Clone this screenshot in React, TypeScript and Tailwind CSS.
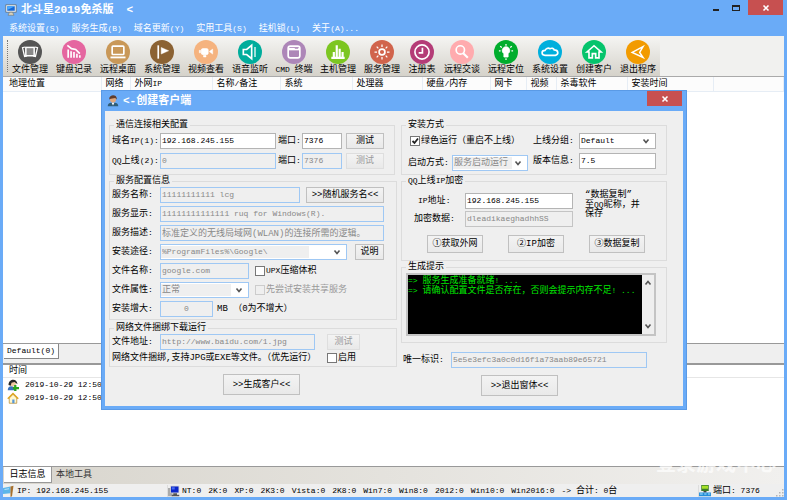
import React, { useState } from 'react';

// --- DATA ---
const MENUS = ['系统设置(S)', '服务生成(B)', '域名更新(Y)', '实用工具(S)', '挂机锁(L)', '关于(A)...'];

interface Tool { label: string; color: string; width: string; icon: React.ReactNode }

const TOOLS: Tool[] = [
    { label: '文件管理', color: 'bg-[#555555]', width: 'w-11', icon: <><path d="M6 6l-3 .8 2.500 10.500 3-.5M18 6l3 .8-2.500 10.500-3-.5" strokeWidth="1.500" /><rect x="7" y="6.500" width="10" height="10" strokeWidth="1.800" fill="#888" /></> },
    { label: '键盘记录', color: 'bg-[#e566a0]', width: 'w-11', icon: <path d="M5 19V9M8.500 19v-8M12 19v-7M15.500 19v-5M19 19v-3M4 4l5 4 5 1 5 5" strokeWidth="2" /> },
    { label: '远程桌面', color: 'bg-[#c99858]', width: 'w-11', icon: <><rect x="5" y="5" width="14" height="10" rx="1" /><path d="M3 18.500h18" strokeWidth="2.200" /></> },
    { label: '系统管理', color: 'bg-[#8b6233]', width: 'w-11', icon: <><path d="M7.500 4v16" strokeWidth="2" /><path d="M11 6.500l9 4-9 4z" fill="#fff" strokeWidth=".5" /></> },
    { label: '视频查看', color: 'bg-[#f5b37f]', width: 'w-11', icon: <><rect x="6.500" y="8" width="8" height="7" rx="1.500" fill="#fff" strokeWidth="1" /><path d="M16 11.500l4-3v6zM4 10h1.500v3H4zM9 16h3v2H9z" fill="#fff" strokeWidth=".6" /></> },
    { label: '语音监听', color: 'bg-[#00ad9c]', width: 'w-11', icon: <><path d="M4 9h4l6-5v16l-6-5H4z" /><path d="M18 6v12" strokeWidth="1.500" /></> },
    { label: 'CMD 终端', color: 'bg-[#ad86b8]', width: 'w-11', icon: <><rect x="5" y="5" width="14" height="14" rx="2.500" /><path d="M5 8.500h14" strokeWidth="3" /><path d="M13 7.500h4" stroke="#ad86b8" strokeWidth="1.200" /></> },
    { label: '主机管理', color: 'bg-[#7cc621]', width: 'w-11', icon: <path d="M4 19h16M7 18v-6M10.500 18V4M14 18V8M17.500 18v-6" strokeWidth="2.600" /> },
    { label: '服务管理', color: 'bg-[#d1644c]', width: 'w-11', icon: <><circle cx="12" cy="12" r="3.500" /><path d="M12 3v3M12 18v3M3 12h3M18 12h3M5.600 5.600l2 2M16.400 16.400l2 2M5.600 18.400l2-2M16.400 7.600l2-2" strokeWidth="1.500" /></> },
    { label: '注册表', color: 'bg-[#b43c77]', width: 'w-9', icon: <><circle cx="12" cy="12" r="8.500" /><path d="M12.500 7v6H8" strokeWidth="2" /></> },
    { label: '远程交谈', color: 'bg-[#ffabae]', width: 'w-11', icon: <><circle cx="10" cy="9.500" r="5" strokeWidth="2" /><path d="M13.500 13.500L19 19" strokeWidth="2.500" /></> },
    { label: '远程定位', color: 'bg-[#00ad2d]', width: 'w-11', icon: <><path d="M9.500 18h5v-4a4.500 4.500 0 1 0-5 0z" fill="#fff" strokeWidth="1" /><path d="M12 2.500v2M5 5l2 1.500M19 5l-2 1.500M3.500 10.500h2M18.500 10.500h2M11 20.500h2" strokeWidth="1.500" /></> },
    { label: '系统设置', color: 'bg-[#00afdd]', width: 'w-11', icon: <path d="M6 16a3.500 3 0 0 1 0-6c1-2 3.500-3.500 6-2 2-1 4.500-.5 5 1.500 5.500 0 5.500 5.500 1.500 6.500z" /> },
    { label: '创建客户', color: 'bg-[#05c46c]', width: 'w-11', icon: <path d="M3.500 12L12 4.500l8.500 7.500H18v7h-4v-5h-4v5H6v-7z" /> },
    { label: '退出程序', color: 'bg-[#f29b00]', width: 'w-11', icon: <path d="M18 5.500L5 12.500l13 6-4-6z" strokeWidth="1.800" /> },
];

const COLUMNS = [
    { label: '地理位置', width: 'w-[98px] pl-1.5' },
    { label: '网络', width: 'w-[29px] pl-1' },
    { label: '外网IP', width: 'w-[82px] pl-1' },
    { label: '名称/备注', width: 'w-[68px] pl-1' },
    { label: '系统', width: 'w-[72px] pl-1' },
    { label: '处理器', width: 'w-[70px] pl-1' },
    { label: '硬盘/内存', width: 'w-[68px] pl-1' },
    { label: '网卡', width: 'w-9 pl-1' },
    { label: '视频', width: 'w-[30px] pl-1' },
    { label: '杀毒软件', width: 'w-[71px] pl-1' },
    { label: '安装时间', width: 'w-[86px] pl-1' },
    { label: '', width: 'w-auto' },
];

const SYSTEMS = ['NT:0', '2K:0', 'XP:0', '2K3:0', 'Vista:0', '2K8:0', 'Win7:0', 'Win8:0', '2012:0', 'Win10:0', 'Win2016:0'];

// Latin runs are set one pixel smaller than the Chinese text around them
const Mixed = ({ text }: { text: string }) => (
    <>{text.split(/([\x20-\x7e]+)/).map((part, i) => (i % 2 ? <span key={i} className="text-[8px]">{part}</span> : part))}</>
);

// --- ICONS ---
const MonitorIcon = () => (
    <svg viewBox="0 0 16 16" className="h-3 w-3 shrink-0"><path d="M1 1h14v10H1z" fill="#e8f0f5" stroke="#5b6a75" /><path d="M3 3h10v6H3z" fill="#1767d5" /><path d="M3 3h10L3 8z" fill="#49a9ff" /><path d="M6 11h4l2 4H4z" fill="#d8d3c0" stroke="#6d6d60" strokeWidth=".7" /></svg>
);
const PersonIcon = () => (
    <svg viewBox="0 0 16 16" className="h-3 w-3 shrink-0"><path d="M1 15c0-4 3-5 7-5s7 1 7 5z" fill="#305d78" /><path d="M6 10l2 4 2-4z" fill="#fff" /><circle cx="8" cy="6" r="4" fill="#dfa77d" /><path d="M3 6c-1-7 11-8 10 0l-2-2-6 1z" fill="#603c2c" /></svg>
);
const UserAddIcon = () => (
    <svg viewBox="0 0 16 16" className="h-3 w-3 shrink-0"><path d="M1 15c0-5 3-6 7-5l5 5z" fill="#3a72bc" /><circle cx="8" cy="6" r="4" fill="#efc8a1" /><path d="M2 8C2 0 13-2 14 7l-4-3-4 1-1 4z" fill="#262626" /><path d="M11 8v8M8 12h8" stroke="#29a61c" strokeWidth="3" /></svg>
);
const HomeIcon = () => (
    <svg viewBox="0 0 16 16" className="h-3 w-3 shrink-0"><path d="M3 8l5-5 5 5v7H3z" fill="#fff8cf" stroke="#b88b30" /><path d="M1 9l7-7 7 7" fill="none" stroke="#dda521" strokeWidth="2" /><path d="M7 10h3v5H7z" fill="#5898d8" /></svg>
);
const SignIcon = () => (
    <svg viewBox="0 0 16 16" className="h-3 w-3 shrink-0"><path d="M0 4l10-2v9L0 12z" fill="#5cb5e9" /><path d="M10 2l4-1-2 14-2 1z" fill="#a8702c" /><path d="M2 6l6-1" stroke="#d5f1ff" /></svg>
);
const ComputersIcon = () => (
    <svg viewBox="0 0 16 16" className="h-3 w-3 shrink-0"><path d="M0 4h6v11H0z" fill="#aaa" /><path d="M3 1h12v10H3z" fill="#cacbd6" /><path d="M4 2h10v8H4z" fill="#0b26c9" /><path d="M5 3h4v3H5z" fill="#496bf2" /><path d="M7 11h5v2H7zM5 13h10v2H5z" fill="#555" /></svg>
);
const NetworkIcon = () => (
    <svg viewBox="0 0 16 16" className="h-3 w-3 shrink-0"><path d="M3 0h10v8H3z" fill="#3b7d27" /><path d="M4 1h8v4H4z" fill="#a5e028" /><path d="M6 8h4v2H6z" fill="#444" /><path d="M0 10h16v5H0z" fill="#278ed8" /><path d="M1 11h4v2H1zM7 11h3v2H7zM12 11h3v2h-3z" fill="#7cc8f5" /></svg>
);
const CloseIcon = () => (
    <svg viewBox="0 0 8 8" className="h-2 w-2" stroke="#fff" strokeWidth="1.600"><path d="M1.500 1.500l5 5M6.500 1.500l-5 5" /></svg>
);
const GripIcon = () => (
    <svg viewBox="0 0 8 8" className="h-2 w-2 self-end" fill="#b5b5b5"><path d="M6 0h1.500v1.500H6zM3 3h1.500v1.500H3zM6 3h1.500v1.500H6zM0 6h1.500v1.500H0zM3 6h1.500v1.500H3zM6 6h1.500v1.500H6z" /></svg>
);
const Chevron = ({ className = '' }: { className?: string }) => (
    <svg viewBox="0 0 8 8" className={`h-2 w-2 shrink-0 ${className}`} fill="none" stroke="#555" strokeWidth="1.600"><path d="M1.500 2.500L4 5.500l2.500-3" /></svg>
);

// --- FORM PARTS ---
const Group = ({ title, className = '', children }: { title: string; className?: string; children: React.ReactNode }) => (
    <fieldset className={`min-w-0 border border-[#dcdcdc] ${className}`}>
        <legend className="ml-1 h-3 px-0.5 leading-3"><Mixed text={title} /></legend>
        {children}
    </fieldset>
);

interface FieldProps { id: string; label: string; value: string; off?: boolean; labelWidth?: string; className?: string; boxClass?: string; textClass?: string }

const Field = ({ id, label, value, off, labelWidth = 'w-12', className = '', boxClass = 'border-[#9fc8f4]', textClass = 'text-[8px]' }: FieldProps) => (
    <div className={`flex min-w-0 items-center ${className}`}>
        <label htmlFor={id} className={`shrink-0 whitespace-nowrap ${labelWidth}`}><Mixed text={label} /></label>
        <input id={id} defaultValue={value} disabled={off} className={`h-4 w-full min-w-0 flex-1 border px-px pb-0.5 leading-3 ${textClass} ${off ? 'bg-[#efefef] text-[#888]' : 'bg-white text-black'} ${boxClass}`} />
    </div>
);

const Choice = ({ id, label, value, off, labelWidth = 'w-12', className = '', boxClass = 'border-[#9fc8f4]', textClass = 'text-[9px]' }: FieldProps) => (
    <div className={`flex min-w-0 items-center ${className}`}>
        <label htmlFor={id} className={`shrink-0 whitespace-nowrap ${labelWidth}`}><Mixed text={label} /></label>
        <div className={`grid h-4 min-w-0 flex-1 grid-cols-[1fr_13px] items-center border bg-white ${boxClass}`}>
            <select id={id} disabled={off} className={`col-span-2 col-start-1 row-start-1 h-3 w-full appearance-none bg-linear-to-r pl-px leading-3 disabled:opacity-100 ${textClass} ${off ? 'from-[#efefef] from-80% to-white to-80% text-[#888]' : 'text-black'}`}>
                <option>{value}</option>
            </select>
            <Chevron className="pointer-events-none col-start-2 row-start-1" />
        </div>
    </div>
);

const Btn = ({ className = '', off, children }: { className?: string; off?: boolean; children: React.ReactNode }) => (
    <button disabled={off} className={`shrink-0 border bg-linear-to-b from-[#f3f3f3] to-[#e9e9e9] leading-3 whitespace-nowrap ${off ? 'border-[#dedede] text-[#999]' : 'border-[#c0c0c0] text-black'} ${className}`}>{children}</button>
);

const Check = ({ label, on, off, className = '' }: { label: string; on?: boolean; off?: boolean; className?: string }) => (
    <label className={`flex items-center gap-px whitespace-nowrap ${off ? 'text-[#999]' : ''} ${className}`}>
        <span className="grid h-[10px] w-[10px] shrink-0 grid-cols-1">
            <input type="checkbox" defaultChecked={on} disabled={off} className={`peer col-start-1 row-start-1 h-[10px] w-[10px] appearance-none border ${off ? 'border-[#ccc] bg-[#efefef]' : 'border-[#777] bg-white'}`} />
            <svg viewBox="0 0 10 10" className="pointer-events-none invisible col-start-1 row-start-1 h-[10px] w-[10px] peer-checked:visible" fill="none" stroke="#222" strokeWidth="1.800"><path d="M2.500 5l2 2 3.500-4.500" /></svg>
        </span>
        <span><Mixed text={label} /></span>
    </label>
);

// --- DIALOG ---
const ClientDialog = ({ onClose }: { onClose: () => void }) => (
    <section role="dialog" aria-label="创建客户端" className="absolute top-[90px] right-[100px] left-[101px] border border-[#5a9ae6] bg-[#6aabf7] px-[3px] pb-[3px]">
        <header className="flex h-5 items-center gap-1 pl-0.5 text-white">
            <PersonIcon />
            <h2 className="flex-1 text-[11px] font-bold">&lt;-创建客户端</h2>
            <button aria-label="关闭" onClick={onClose} className="mr-px flex h-[15px] w-[35px] items-center justify-center self-start bg-[#c75050]"><CloseIcon /></button>
        </header>
        <div className="flex gap-1 bg-[#efefef] px-1 pt-2 pb-2.5">
            <div className="flex w-[288px] flex-col">
                <Group title="通信连接相关配置" className="mr-0.5 h-14">
                    <div className="flex flex-col gap-1 pt-0.5 pr-2.5 pl-0.5">
                        <div className="flex items-center gap-0.5">
                            <Field id="host" label="域名IP(1):" value="192.168.245.155" className="flex-1" boxClass="border-[#b4b4b4]" />
                            <Field id="port" label="端口:" value="7376" labelWidth="w-6" className="w-16" boxClass="border-[#b4b4b4]" />
                            <Btn className="ml-0.5 h-4 w-[38px]">测试</Btn>
                        </div>
                        <div className="flex items-center gap-0.5">
                            <Field id="host2" label="QQ上线(2):" value="0" off className="flex-1" />
                            <Field id="port2" label="端口:" value="7376" off labelWidth="w-6" className="w-16" />
                            <Btn off className="ml-0.5 h-4 w-[38px]">测试</Btn>
                        </div>
                    </div>
                </Group>
                <Group title="服务配置信息" className="h-[145px]">
                    <div className="flex flex-col gap-[3px] pr-3 pl-0.5">
                        <div className="flex items-center gap-1.5">
                            <Field id="svc" label="服务名称:" value="11111111111 lcg" off className="flex-1" />
                            <Btn className="h-4 w-[78px]">&gt;&gt;随机服务名&lt;&lt;</Btn>
                        </div>
                        <Field id="display" label="服务显示:" value="11111111111111 ruq for Windows(R)." off />
                        <Field id="desc" label="服务描述:" value="标准定义的无线局域网(WLAN)的连接所需的逻辑。" off textClass="text-[9px]" />
                        <div className="flex items-center gap-2">
                            <Choice id="path" label="安装途径:" value="%ProgramFiles%\Google\" off className="flex-1" textClass="text-[8px]" />
                            <Btn className="h-4 w-[29px]">说明</Btn>
                        </div>
                        <div className="flex items-center gap-1.5">
                            <Field id="file" label="文件名称:" value="google.com" off className="w-[137px]" />
                            <Check label="UPX压缩体积" />
                        </div>
                        <div className="flex items-center gap-1.5">
                            <Choice id="attr" label="文件属性:" value="正常" off className="w-[137px]" />
                            <Check label="先尝试安装共享服务" off />
                        </div>
                        <div className="flex items-center gap-1">
                            <Field id="grow" label="安装增大:" value="0" off className="w-[101px]" boxClass="border-[#9fc8f4] text-center" />
                            <span>MB （0为不增大）</span>
                        </div>
                    </div>
                </Group>
                <Group title="网络文件捆绑下载运行" className="mt-0.5 h-[45px]">
                    <div className="flex flex-col gap-0.5 pr-9 pl-0.5">
                        <div className="flex items-center gap-3">
                            <Field id="url" label="文件地址:" value="http://www.baidu.com/1.jpg" off className="flex-1" />
                            <Btn off className="h-4 w-[33px]">测试</Btn>
                        </div>
                        <div className="flex items-center justify-between whitespace-nowrap">
                            <span>网络文件捆绑,支持JPG或EXE等文件。（优先运行）</span>
                            <Check label="启用" className="w-[33px]" />
                        </div>
                    </div>
                </Group>
                <Btn className="mt-[7px] ml-[114px] h-[21px] w-[77px]">&gt;&gt;生成客户&lt;&lt;</Btn>
            </div>

            <div className="flex w-[266px] flex-col">
                <Group title="安装方式" className="h-14">
                    <div className="flex justify-between pt-0.5 pr-2.5 pl-1">
                        <div className="flex w-[122px] flex-col gap-1.5">
                            <Check label="绿色运行（重启不上线）" on className="ml-1 h-4" />
                            <Choice id="boot" label="启动方式:" value="服务启动运行" off labelWidth="w-[46px] pl-0.5" />
                        </div>
                        <div className="flex w-[123px] flex-col gap-1">
                            <Choice id="group" label="上线分组:" value="Default" labelWidth="w-[46px]" boxClass="border-[#b4b4b4]" textClass="text-[8px]" />
                            <Field id="ver" label="版本信息:" value="7.5" labelWidth="w-[46px]" boxClass="border-[#b4b4b4]" />
                        </div>
                    </div>
                </Group>
                <Group title="QQ上线IP加密" className="h-[86px]">
                    <div className="flex gap-3 pt-1 pl-3">
                        <div className="flex w-[159px] flex-col gap-0.5 pt-0.5">
                            <Field id="ip" label="IP地址:" value="192.168.245.155" labelWidth="w-[51px] pl-1" boxClass="border-[#b4b4b4]" />
                            <Field id="enc" label="加密数据:" value="dleadikaeghadhhSS" off labelWidth="w-[51px]" boxClass="border-[#c4c4c4]" />
                        </div>
                        <p className="w-16 leading-[9px]">“数据复制”<br />至<span className="text-[8px]">QQ</span>昵称，并<br />保存</p>
                    </div>
                    <div className="flex gap-[25px] pt-2 pl-[25px]">
                        <Btn className="h-[18px] w-14">①获取外网</Btn>
                        <Btn className="h-[18px] w-14">②IP加密</Btn>
                        <Btn className="h-[18px] w-14">③数据复制</Btn>
                    </div>
                </Group>
                <Group title="生成提示" className="h-[82px]">
                    <div className="mr-2.5 ml-1 flex h-[63px] border-2 border-[#c4c4c4] bg-[#efefef]">
                        <div className="flex-1 bg-black pt-px leading-[9px] whitespace-nowrap text-[#00e800]">
                            <p><Mixed text="=> 服务生成准备就绪! ..." /></p>
                            <p><Mixed text="=> 请确认配置文件是否存在，否则会提示内存不足! ..." /></p>
                        </div>
                        <div className="flex w-3 flex-col items-center justify-between py-1">
                            <Chevron className="rotate-180" />
                            <Chevron />
                        </div>
                    </div>
                </Group>
                <Field id="uid" label="唯一标识:" value="5e5e3efc3a0c0d16f1a73aab89e65721" off labelWidth="w-[50px] pl-0.5" className="mt-[9px] mr-5" />
                <Btn className="mt-[7px] ml-20 h-[21px] w-[77px]">&gt;&gt;退出窗体&lt;&lt;</Btn>
            </div>
        </div>
    </section>
);

// --- MAIN ---
const App: React.FC = () => {
    const [dialogOpen, setDialogOpen] = useState(true);

    return (
        <div className="relative flex h-screen min-h-[500px] flex-col overflow-hidden bg-[#6aabf7] px-[3px] pb-[3px] font-['Liberation_Mono','Noto_Sans_CJK_SC',monospace] text-[9px] leading-3 text-black">
            <header className="flex h-5 shrink-0 items-center pl-0.5 text-white">
                <MonitorIcon />
                <h1 className="ml-1 flex-1 text-[11px] font-bold whitespace-pre">北斗星2019免杀版  &lt;</h1>
                <div className="flex h-[15px] items-center self-start">
                    <button aria-label="最小化" className="flex h-full w-5 items-center justify-center"><span className="mt-1 h-0.5 w-1.5 bg-[#222]" /></button>
                    <button aria-label="最大化" className="mr-0.5 flex h-full w-5 items-center justify-center"><span className="h-1.5 w-2 border border-t-2 border-[#222]" /></button>
                    <button aria-label="关闭" className="mr-px flex h-full w-[35px] items-center justify-center bg-[#c75050]"><CloseIcon /></button>
                </div>
            </header>
            <nav className="flex h-4 shrink-0 items-center gap-3 pt-0.5 pl-1.5 text-white">
                {MENUS.map(m => <button key={m}><Mixed text={m} /></button>)}
            </nav>
            <div className="flex h-[41px] shrink-0 border-b border-[#aaa] bg-[#f1f1ef]">
                <div className="flex bg-linear-to-b from-[#f5f5f3] to-[#d5d2ca] pl-1">
                    <div className="my-1 border-l border-dotted border-[#777]" />
                    {TOOLS.map(t => (
                        <button key={t.label} className={`flex flex-col items-center pt-1 whitespace-nowrap ${t.width}`}>
                            <span className={`flex h-6 w-6 shrink-0 items-center justify-center rounded-full ${t.color}`}>
                                <svg viewBox="0 0 24 24" className="h-5 w-5" fill="none" stroke="#fff" strokeWidth="2">{t.icon}</svg>
                            </span>
                            <span><Mixed text={t.label} /></span>
                        </button>
                    ))}
                </div>
            </div>
            <main className="flex min-h-0 flex-1 flex-col bg-white">
                <table className="w-full table-fixed border-collapse">
                    <thead>
                        <tr className="h-[14px]">
                            {COLUMNS.map(c => <th key={c.label} className={`border-r border-b border-[#e6edf5] bg-[#fcfcfc] py-0 pr-0 text-left font-normal whitespace-nowrap ${c.width}`}><Mixed text={c.label} /></th>)}
                        </tr>
                    </thead>
                </table>
                <div className="flex-1" />
                <div className="flex h-5 shrink-0 items-start border-t border-[#999] bg-[#efefef] pl-px">
                    <button className="h-[15px] w-[55px] border-r border-b border-[#888] bg-white text-[8px]">Default(0)</button>
                </div>
            </main>
            <section className="flex h-[103px] shrink-0 flex-col border-t-2 border-[#999] bg-white">
                <h3 className="h-[13px] border-b border-[#e6e6e6] pl-1.5">时间</h3>
                <ul className="text-[8px]">
                    <li className="flex h-[13px] items-center gap-1.5 pl-1"><UserAddIcon />2019-10-29 12:50:13</li>
                    <li className="flex h-[13px] items-center gap-1.5 pl-1"><HomeIcon />2019-10-29 12:50:13</li>
                </ul>
            </section>
            <div className="relative flex h-[18px] shrink-0 border-t border-[#999] bg-linear-to-r from-[#d8d5cd] to-[#f1f0ee] pl-px">
                <button className="h-4 w-12 border-r border-b border-[#999] bg-white">日志信息</button>
                <button className="h-4 w-11 text-[#333]">本地工具</button>
                <span className="pointer-events-none absolute right-2 bottom-2 text-[20px] leading-5 font-bold text-white/70">登录游戏中心</span>
            </div>
            <footer className="flex h-[13px] shrink-0 items-center bg-[#efefef] text-[8px] whitespace-nowrap">
                <div className="flex w-[164px] items-center gap-0.5"><SignIcon />IP: 192.168.245.155</div>
                <div className="flex flex-1 items-center gap-[7px] border-l border-[#ddd]">
                    <span className="flex items-center gap-0.5"><ComputersIcon />{SYSTEMS[0]}</span>
                    {SYSTEMS.slice(1).map(s => <span key={s}>{s}</span>)}
                    <span>-&gt; <span className="text-[9px]">合计</span>: 0<span className="text-[9px]">台</span></span>
                </div>
                <div className="flex w-[86px] items-center gap-0.5 border-l border-[#ddd]"><NetworkIcon /><span className="flex-1"><span className="text-[9px]">端口</span>: 7376</span><GripIcon /></div>
            </footer>
            {dialogOpen && <ClientDialog onClose={() => setDialogOpen(false)} />}
        </div>
    );
};

export default App;
